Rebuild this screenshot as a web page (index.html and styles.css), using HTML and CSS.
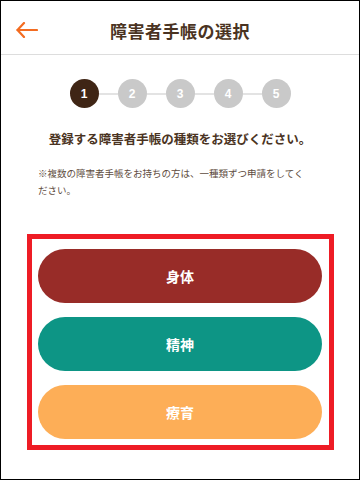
FILE: index.html
```html
<!DOCTYPE html>
<html lang="ja">
<head>
    <meta charset="UTF-8">
    <meta name="viewport" content="width=device-width, initial-scale=1.0">
    <title>障害者手帳の選択</title>
    <link rel="stylesheet" href="styles.css">
</head>
<body>
<div class="screen">
    <header class="app-header">
        <button class="back-button" aria-label="戻る">
            <svg class="back-icon" viewBox="0 0 22 16">
                <path d="M8 1L1.5 8L8 15"></path>
                <path d="M1.5 8H21"></path>
            </svg>
        </button>
        <h1 class="app-title">障害者手帳の選択</h1>
    </header>

    <!-- Step indicator -->
    <div class="steps">
        <span class="step step-active">1</span>
        <span class="step-line"></span>
        <span class="step">2</span>
        <span class="step-line"></span>
        <span class="step">3</span>
        <span class="step-line"></span>
        <span class="step">4</span>
        <span class="step-line"></span>
        <span class="step">5</span>
    </div>

    <p class="lead">登録する障害者手帳の種類をお選びください。</p>
    <p class="note">※複数の障害者手帳をお持ちの方は、一種類ずつ申請をしてください。</p>

    <div class="choice-box">
        <button class="choice choice-body">身体</button>
        <button class="choice choice-mind">精神</button>
        <button class="choice choice-care">療育</button>
    </div>
</div>
</body>
</html>
```

FILE: styles.css
```css
* {
    box-sizing: border-box;
    margin: 0;
    padding: 0;
    font-family: "Noto Sans CJK JP", "Noto Sans", sans-serif;
}

body {
    background-color: #ffffff;
}

.screen {
    width: 360px;
    height: 480px;
    border: 1px solid #000000;
    display: flex;
    flex-direction: column;
    align-items: center;
}

.app-header {
    position: relative;
    width: 100%;
    height: 54px;
    border-bottom: 1px solid #dddddd;
    display: flex;
    align-items: center;
    justify-content: center;
}

.back-button {
    position: absolute;
    left: 15px;
    top: 21px;
    background: none;
    border: none;
    width: 22px;
    height: 16px;
    display: flex;
}

.back-icon {
    width: 22px;
    height: 16px;
    fill: none;
    stroke: #f36c21;
    stroke-width: 2.2;
    stroke-linecap: round;
    stroke-linejoin: round;
}

.app-title {
    font-size: 17px;
    font-weight: bold;
    color: #4a3322;
    letter-spacing: 0.5px;
    margin-top: 5px;
}

.steps {
    display: flex;
    align-items: center;
    margin-top: 24px;
}

.step {
    width: 29px;
    height: 29px;
    border-radius: 50%;
    background-color: #c9c9c9;
    color: #ffffff;
    font-family: "Liberation Sans", Arial, sans-serif;
    font-size: 12px;
    font-weight: bold;
    display: flex;
    align-items: center;
    justify-content: center;
}

.step-active {
    background-color: #3f2515;
}

.step-line {
    width: 19px;
    height: 2px;
    background-color: #e3e3e3;
}

.lead {
    margin-top: 21px;
    font-size: 12.5px;
    font-weight: bold;
    color: #4a3322;
    text-align: center;
}

.note {
    width: 272px;
    margin-top: 17px;
    margin-right: 12px;
    font-size: 9.5px;
    line-height: 17px;
    color: #5e4c40;
}

.choice-box {
    width: 307px;
    margin-top: 35px;
    margin-left: 1px;
    border: 5px solid #ee1c25;
    padding: 10px 7px 6px 6px;
    display: flex;
    flex-direction: column;
    gap: 14px;
}

.choice {
    width: 100%;
    height: 54px;
    border: none;
    border-radius: 27px;
    color: #ffffff;
    font-size: 14px;
    font-weight: bold;
    font-family: "Noto Sans CJK JP", sans-serif;
    cursor: pointer;
}

.choice-body {
    background-color: #982c28;
}

.choice-mind {
    background-color: #0d9585;
}

.choice-care {
    background-color: #fdae57;
}
```
